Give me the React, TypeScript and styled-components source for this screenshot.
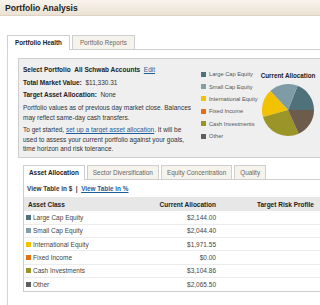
import React from "react";
import styled, { createGlobalStyle } from "styled-components";

interface IAsset {
  name: string;
  value: number;
  color: string;
  slice: string;
}

const assets: IAsset[] = [
  { name: "Large Cap Equity", value: 2144.0, color: "#4e717a", slice: "#4f7179" },
  { name: "Small Cap Equity", value: 2044.4, color: "#7f9ea8", slice: "#7f9ca6" },
  { name: "International Equity", value: 1971.55, color: "#f4c300", slice: "#f2c200" },
  { name: "Fixed Income", value: 0, color: "#e2700f", slice: "#e2700f" },
  { name: "Cash Investments", value: 3104.86, color: "#9a9326", slice: "#9b9428" },
  { name: "Other", value: 2065.5, color: "#5e5e5e", slice: "#6d5b4b" },
];

const money = (v: number) =>
  "$" + v.toLocaleString("en-US", { minimumFractionDigits: 2, maximumFractionDigits: 2 });

function Pie({ size }: { size: number }) {
  const total = assets.reduce((s, a) => s + a.value, 0);
  const r = size / 2;
  let start = 0;
  // slices go counter-clockwise from 3 o'clock
  const pt = (a: number) => `${r + r * Math.cos(a)},${r - r * Math.sin(a)}`;
  return (
    <svg width={size} height={size} viewBox={`0 0 ${size} ${size}`}>
      {assets
        .filter((a) => a.value > 0)
        .map((a) => {
          const sweep = (a.value / total) * Math.PI * 2;
          const end = start + sweep;
          const d = `M${r},${r} L${pt(start)} A${r},${r} 0 ${sweep > Math.PI ? 1 : 0} 0 ${pt(end)} Z`;
          start = end;
          return <path key={a.name} d={d} fill={a.slice} />;
        })}
    </svg>
  );
}

export default function App() {
  return (
    <Page>
      <GlobalStyle />
      <Header>
        <Title>Portfolio Analysis</Title>
      </Header>

      <Section>
        <TabBar>
          <Tab $active>Portfolio Health</Tab>
          <Tab>Portfolio Reports</Tab>
        </TabBar>

        <PanelBody>
          <Summary>
            <InfoCol>
              <InfoRow>
                <b>Select Portfolio</b>&nbsp;&nbsp;<b>All Schwab Accounts</b>&nbsp;&nbsp;
                <Link>Edit</Link>
              </InfoRow>
              <InfoRow>
                <b>Total Market Value:</b>&nbsp; $11,330.31
              </InfoRow>
              <InfoRow>
                <b>Target Asset Allocation:</b>&nbsp; None
              </InfoRow>
              <Note>
                Portfolio values as of previous day market close. Balances may reflect
                same-day cash transfers.
              </Note>
              <Note $gap>
                To get started, <Link>set up a target asset allocation</Link>. It will be
                used to assess your current portfolio against your goals, time horizon and
                risk tolerance.
              </Note>
            </InfoCol>

            <Legend>
              {assets.map((a) => (
                <LegendItem key={a.name}>
                  <Swatch $color={a.color} />
                  {a.name}
                </LegendItem>
              ))}
            </Legend>

            <ChartCol>
              <ChartTitle>Current Allocation</ChartTitle>
              <Pie size={52} />
            </ChartCol>
          </Summary>

          <SubPanel>
            <TabBar>
              <SubTab $active>Asset Allocation</SubTab>
              <SubTab>Sector Diversification</SubTab>
              <SubTab>Equity Concentration</SubTab>
              <SubTab>Quality</SubTab>
            </TabBar>
            <SubBody>
              <ViewToggle>
                View Table in $ &nbsp;|&nbsp; <Link>View Table in %</Link>
              </ViewToggle>
              <Table>
                <thead>
                  <tr>
                    <Th $w={126}>Asset Class</Th>
                    <Th $w={62} $right>
                      Current Allocation
                    </Th>
                    <Th $pad={38}>Target Risk Profile</Th>
                  </tr>
                </thead>
                <tbody>
                  {assets.map((a) => (
                    <Row key={a.name}>
                      <Td>
                        <NameCell>
                          <Swatch $color={a.color} $size={5} />
                          {a.name}
                        </NameCell>
                      </Td>
                      <Td $right>{money(a.value)}</Td>
                      <Td />
                    </Row>
                  ))}
                </tbody>
              </Table>
            </SubBody>
          </SubPanel>
        </PanelBody>
      </Section>
    </Page>
  );
}

const GlobalStyle = createGlobalStyle`
  html, body {
    margin: 0;
    padding: 0;
    background: #fff;
  }
  body {
    font-family: "Liberation Sans", Arial, sans-serif;
    color: #333;
  }
`;

const Page = styled.div`
  width: 320px;
  height: 305px;
  overflow: hidden;
  display: flex;
  flex-direction: column;
`;

const Header = styled.div`
  height: 15px;
  flex-shrink: 0;
  display: flex;
  align-items: center;
  padding-left: 5px;
  background: linear-gradient(#f8f4ed, #ebe2d3);
  border-bottom: 1px solid #ddd3c4;
`;

const Title = styled.h1`
  margin: 0;
  font-size: 8.6px;
  font-weight: bold;
  color: #222;
`;

const Section = styled.div`
  flex: 1;
  display: flex;
  flex-direction: column;
  margin: 19px 0 0 7px;
`;

const TabBar = styled.div`
  display: flex;
  align-items: flex-end;
  gap: 2px;
  border-bottom: 1px solid #cfcfcf;
  flex-shrink: 0;
`;

const Tab = styled.div<{ $active?: boolean }>`
  box-sizing: border-box;
  height: ${(p) => (p.$active ? 15 : 14)}px;
  margin-bottom: ${(p) => (p.$active ? -1 : 0)}px;
  padding: 0 7px ${(p) => (p.$active ? 1 : 0)}px;
  display: flex;
  align-items: center;
  border: 1px solid #cfcfcf;
  border-bottom: none;
  background: ${(p) => (p.$active ? "#fff" : "#f6f3ec")};
  color: ${(p) => (p.$active ? "#222" : "#666")};
  font-size: 6.3px;
  font-weight: ${(p) => (p.$active ? "bold" : "normal")};
  white-space: nowrap;
  position: relative;
`;

const SubTab = styled(Tab)`
  padding-left: 5px;
  padding-right: 5px;
  font-size: 6.4px;
`;

const PanelBody = styled.div`
  flex: 1;
  border-left: 1px solid #d4d4d4;
  padding: 8px 0 0 10px;
`;

const Summary = styled.div`
  box-sizing: border-box;
  width: 420px;
  height: 100px;
  display: flex;
  background: #efefef;
  border: 1px solid #cdcdcd;
`;

const InfoCol = styled.div`
  width: 172px;
  flex-shrink: 0;
  padding: 5px 0 0 4px;
  font-size: 6.5px;
  color: #333;

  b {
    color: #222;
  }
`;

const InfoRow = styled.div`
  height: 12.5px;
  line-height: 12.5px;
  white-space: nowrap;
`;

const Note = styled.p<{ $gap?: boolean }>`
  margin: ${(p) => (p.$gap ? 3 : 1.5)}px 0 0;
  line-height: 9.5px;
`;

const Link = styled.a`
  color: #1c5d9c;
  text-decoration: underline;
  cursor: pointer;
`;

const Legend = styled.div`
  width: 56px;
  flex-shrink: 0;
  margin-left: 6px;
  padding-top: 9px;
`;

const LegendItem = styled.div`
  height: 12.4px;
  display: flex;
  align-items: center;
  gap: 3px;
  font-size: 5.7px;
  color: #555;
  white-space: nowrap;
`;

const Swatch = styled.span<{ $color: string; $size?: number }>`
  display: inline-block;
  flex-shrink: 0;
  width: ${(p) => p.$size ?? 5}px;
  height: ${(p) => p.$size ?? 5}px;
  background: ${(p) => p.$color};
`;

const ChartCol = styled.div`
  width: 58px;
  flex-shrink: 0;
  margin-left: 2px;
  display: flex;
  flex-direction: column;
  align-items: center;
  padding-top: 13px;

  svg {
    margin-top: 4px;
  }
`;

const ChartTitle = styled.div`
  height: 8px;
  line-height: 8px;
  font-size: 6.3px;
  font-weight: bold;
  color: #222;
  white-space: nowrap;
`;

const SubPanel = styled.div`
  margin: 7px 0 0 5px;
`;

const SubBody = styled.div`
  border-left: 1px solid #cdcdcd;
  border-bottom: 1px solid #cdcdcd;
  width: 420px;
  padding-top: 3px;
`;

const ViewToggle = styled.div`
  height: 12px;
  line-height: 12px;
  padding-left: 3px;
  font-size: 6.4px;
  font-weight: bold;
  color: #333;
  white-space: nowrap;
`;

const Table = styled.table`
  margin-top: 2px;
  border-collapse: collapse;
  width: 100%;
  font-size: 6.5px;
  color: #444;
`;

const Th = styled.th<{ $w?: number; $right?: boolean; $pad?: number }>`
  height: 14px;
  padding: 0 ${(p) => (p.$right ? 3 : 0)}px 0 ${(p) => p.$pad ?? (p.$right ? 0 : 4)}px;
  width: ${(p) => (p.$w ? `${p.$w}px` : "auto")};
  background: #e7e7e7;
  text-align: ${(p) => (p.$right ? "right" : "left")};
  font-weight: bold;
  color: #222;
  white-space: nowrap;
`;

const Row = styled.tr`
  height: 13.33px;
  border-bottom: 1px solid #ececec;

  &:last-child {
    border-bottom: none;
  }
`;

const Td = styled.td<{ $right?: boolean }>`
  padding: 0 ${(p) => (p.$right ? 3 : 0)}px 0 ${(p) => (p.$right ? 0 : 2)}px;
  text-align: ${(p) => (p.$right ? "right" : "left")};
  white-space: nowrap;
`;

const NameCell = styled.span`
  display: flex;
  align-items: center;
  gap: 2px;
`;
